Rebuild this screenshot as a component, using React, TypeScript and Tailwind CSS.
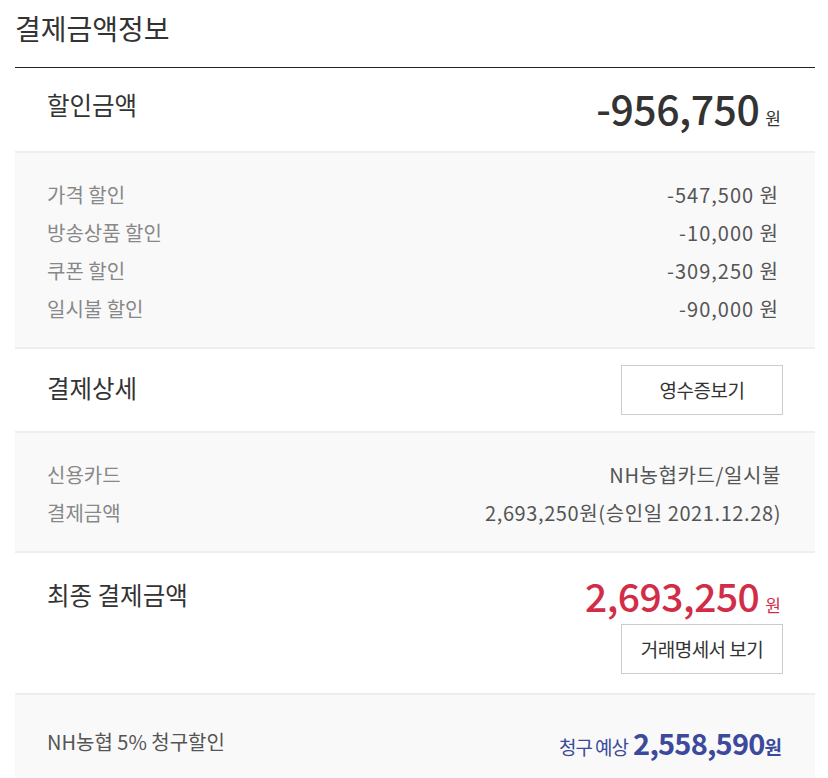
const font = { fontFamily: '"Noto Sans CJK KR", "Noto Sans", sans-serif' };

const discounts = [
  { label: "가격 할인", value: "-547,500" },
  { label: "방송상품 할인", value: "-10,000" },
  { label: "쿠폰 할인", value: "-309,250" },
  { label: "일시불 할인", value: "-90,000" },
];

const payDetails = [
  { label: "신용카드", value: "NH농협카드/일시불" },
  { label: "결제금액", value: "2,693,250원(승인일 2021.12.28)" },
];

function ActionButton({ children }: { children: React.ReactNode }) {
  return (
    <button className="w-[162px] h-[50px] border border-[#cccccc] bg-white text-[19px] text-[#333] tracking-[-0.5px]">
      {children}
    </button>
  );
}

export default function App() {
  return (
    <div className="bg-white min-h-screen" style={font}>
      <div className="w-[800px] ml-[15px]">
        {/* Title */}
        <h1 className="pt-[8px] pb-[19px] text-[28px] leading-[40px] text-[#333] font-normal">
          결제금액정보
        </h1>

        {/* 할인금액 */}
        <div className="border-t border-[#222]">
          <div className="flex justify-between items-start pl-[32px] pr-[34px] pt-[14px] h-[85px] border-b-2 border-[#eeeeee]">
            <div className="mt-[7px] text-[24.5px] leading-[32px] text-[#333]">할인금액</div>
            <div className="flex items-baseline gap-[6px] text-[#333]">
              <span className="text-[41px] leading-[50px] font-medium tracking-[-0.5px]">-956,750</span>
              <span className="text-[17px]">원</span>
            </div>
          </div>
          <div className="bg-[#f9f9f9] pl-[32px] pr-[36px] pt-[23px] pb-[19px] border-b-2 border-[#eeeeee]">
            {discounts.map((d) => (
              <div key={d.label} className="flex justify-between text-[20px] leading-[38px]">
                <span className="text-[#888]">{d.label}</span>
                <span className="text-[#555] tracking-[1px]">{d.value} 원</span>
              </div>
            ))}
          </div>
        </div>

        {/* 결제상세 */}
        <div className="flex justify-between items-center pl-[32px] pr-[32px] h-[84px] border-b-2 border-[#eeeeee]">
          <div className="text-[24.5px] leading-[32px] text-[#333] -mt-[4px]">결제상세</div>
          <ActionButton>영수증보기</ActionButton>
        </div>
        <div className="bg-[#f9f9f9] pl-[32px] pr-[34px] pt-[23px] pb-[19px] border-b-2 border-[#eeeeee]">
          {payDetails.map((d) => (
            <div key={d.label} className="flex justify-between text-[20px] leading-[38px]">
              <span className="text-[#888]">{d.label}</span>
              <span className="text-[#555] tracking-[0.6px]">{d.value}</span>
            </div>
          ))}
        </div>

        {/* 최종 결제금액 */}
        <div className="flex justify-between items-start pl-[32px] pr-[32px] pt-[17px] pb-[19px] border-b-2 border-[#eeeeee]">
          <div className="mt-[9px] text-[24.5px] leading-[32px] text-[#333]">최종 결제금액</div>
          <div className="flex flex-col items-end gap-[4px]">
            <div className="flex items-baseline gap-[6px] text-[#d22d48] pr-[2px]">
              <span className="text-[39px] leading-[50px] font-medium tracking-[-0.5px]">2,693,250</span>
              <span className="text-[17px]">원</span>
            </div>
            <ActionButton>거래명세서 보기</ActionButton>
          </div>
        </div>

        {/* 청구할인 */}
        <div className="bg-[#f9f9f9] flex justify-between items-center pl-[32px] pr-[33px] h-[96px]">
          <span className="text-[20px] text-[#555] -mt-[2px]">NH농협 5% 청구할인</span>
          <div className="flex items-baseline text-[#3b4a9c]">
            <span className="text-[19px] tracking-[-1px] mr-[5px]">청구 예상</span>
            <span className="text-[29px] font-bold tracking-[-0.8px]">2,558,590</span>
            <span className="text-[19px] font-bold">원</span>
          </div>
        </div>
      </div>
    </div>
  );
}
